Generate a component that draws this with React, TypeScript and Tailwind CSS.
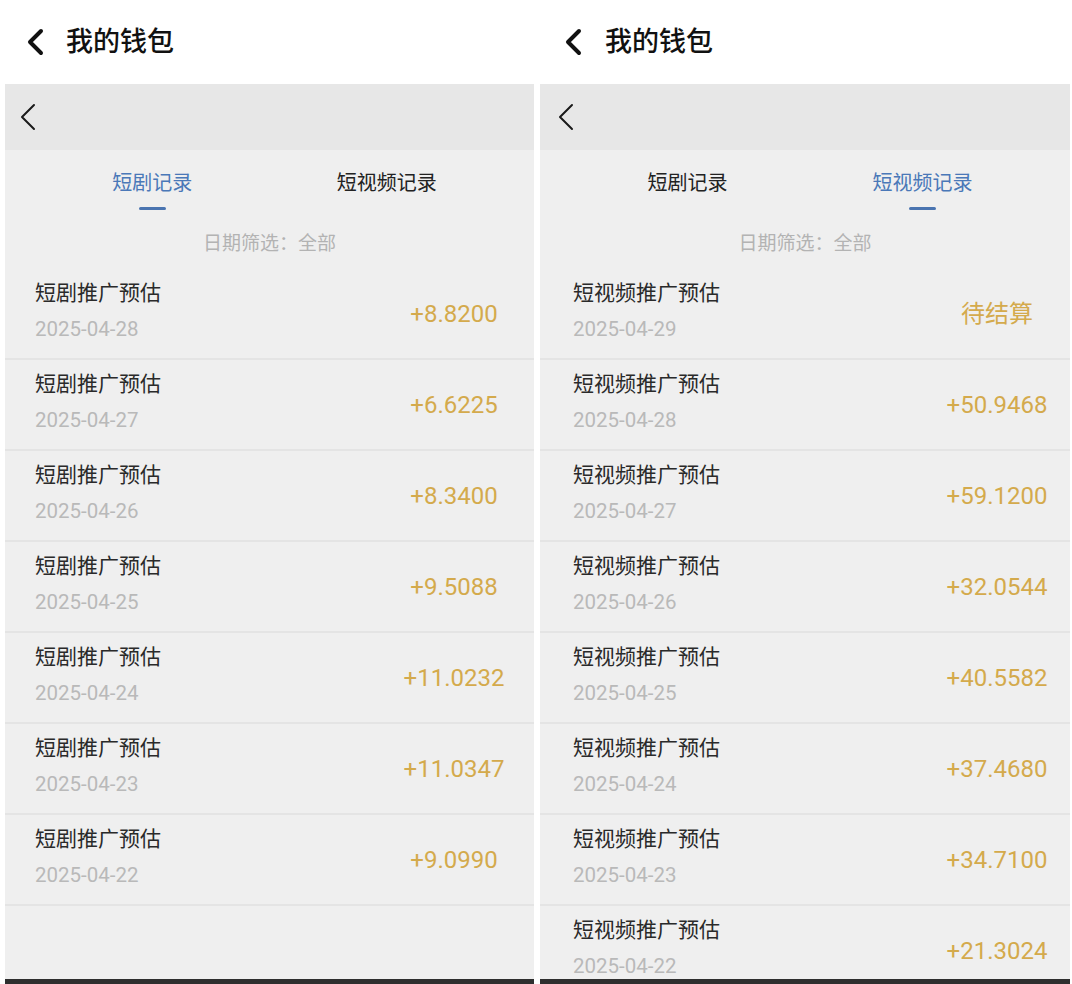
import React from "react";

type Row = { title: string; date: string; amount: string };

const dramaRows: Row[] = [
  { title: "短剧推广预估", date: "2025-04-28", amount: "+8.8200" },
  { title: "短剧推广预估", date: "2025-04-27", amount: "+6.6225" },
  { title: "短剧推广预估", date: "2025-04-26", amount: "+8.3400" },
  { title: "短剧推广预估", date: "2025-04-25", amount: "+9.5088" },
  { title: "短剧推广预估", date: "2025-04-24", amount: "+11.0232" },
  { title: "短剧推广预估", date: "2025-04-23", amount: "+11.0347" },
  { title: "短剧推广预估", date: "2025-04-22", amount: "+9.0990" },
];

const videoRows: Row[] = [
  { title: "短视频推广预估", date: "2025-04-29", amount: "待结算" },
  { title: "短视频推广预估", date: "2025-04-28", amount: "+50.9468" },
  { title: "短视频推广预估", date: "2025-04-27", amount: "+59.1200" },
  { title: "短视频推广预估", date: "2025-04-26", amount: "+32.0544" },
  { title: "短视频推广预估", date: "2025-04-25", amount: "+40.5582" },
  { title: "短视频推广预估", date: "2025-04-24", amount: "+37.4680" },
  { title: "短视频推广预估", date: "2025-04-23", amount: "+34.7100" },
  { title: "短视频推广预估", date: "2025-04-22", amount: "+21.3024" },
];

function BoldChevron() {
  return (
    <svg width="20" height="28" viewBox="0 0 20 28" fill="none">
      <path d="M16 3 L5 14 L16 25" stroke="#111" strokeWidth="4" strokeLinecap="round" strokeLinejoin="round" />
    </svg>
  );
}

function ThinChevron() {
  return (
    <svg width="18" height="28" viewBox="0 0 18 28" fill="none">
      <path d="M15 2 L3 14 L15 26" stroke="#1a1a1a" strokeWidth="2" strokeLinecap="round" strokeLinejoin="round" />
    </svg>
  );
}

function Tab({ label, active }: { label: string; active: boolean }) {
  return (
    <div className="flex-1 flex flex-col items-center">
      <span
        className={
          active
            ? "text-[20px] leading-[28px] text-[#4a78b8]"
            : "text-[20px] leading-[28px] text-[#222]"
        }
      >
        {label}
      </span>
      <div className={active ? "mt-[10px] h-[3px] w-[27px] rounded-full bg-[#4a74b0]" : "mt-[10px] h-[3px] w-[27px]"} />
    </div>
  );
}

function RecordRow({ row, padLeft, amountRight }: { row: Row; padLeft: string; amountRight: string }) {
  return (
    <div className={`flex h-[91px] shrink-0 items-start border-b-2 border-[#e4e4e4] ${padLeft} ${amountRight}`}>
      <div className="flex flex-1 flex-col pt-[10px]">
        <span className="text-[21px] leading-[28px] text-[#2a2a2a]">{row.title}</span>
        <span className="mt-[8px] text-[20.5px] leading-[28px] text-[#b9b9b9]">{row.date}</span>
      </div>
      <div className="flex h-full w-[120px] items-center justify-center">
        <span className="text-[24px] leading-[30px] text-[#d4aa4c]">{row.amount}</span>
      </div>
    </div>
  );
}

function Panel({
  active,
  rows,
  chevronPad,
  padLeft,
  amountRight,
}: {
  active: "drama" | "video";
  rows: Row[];
  chevronPad: string;
  padLeft: string;
  amountRight: string;
}) {
  return (
    <div className="flex h-[900px] flex-col overflow-hidden">
      <div className={`flex h-[66px] shrink-0 items-center bg-[#e7e7e7] ${chevronPad}`}>
        <ThinChevron />
      </div>
      <div className="flex min-h-0 flex-1 flex-col overflow-hidden bg-[#efefef]">
        <div className="flex px-[30px] pt-[19px]">
          <Tab label="短剧记录" active={active === "drama"} />
          <Tab label="短视频记录" active={active === "video"} />
        </div>
        <div className="mt-[20px] mb-[11px] text-center text-[19px] leading-[28px] text-[#b3b3b3]">
          日期筛选：全部
        </div>
        {rows.map((r) => (
          <RecordRow key={r.date} row={r} padLeft={padLeft} amountRight={amountRight} />
        ))}
      </div>
      <div className="h-[5px] shrink-0 bg-[#2e2e2e]" />
    </div>
  );
}

export default function App() {
  return (
    <div
      className="flex h-[984px] w-[1072px] overflow-hidden bg-white"
      style={{ fontFamily: 'Roboto, "Noto Sans CJK SC", sans-serif' }}
    >
      <div className="flex w-[534px] flex-col">
        <div className="flex h-[84px] items-center gap-[21px] pl-[25px]">
          <BoldChevron />
          <span className="text-[27px] leading-[34px] font-medium text-[#111]">我的钱包</span>
        </div>
        <div className="ml-[5px] w-[529px]">
          <Panel active="drama" rows={dramaRows} chevronPad="pl-[14px]" padLeft="pl-[30px]" amountRight="pr-[20px]" />
        </div>
      </div>
      <div className="flex w-[538px] flex-col">
        <div className="flex h-[84px] items-center gap-[22px] pl-[29px]">
          <BoldChevron />
          <span className="text-[27px] leading-[34px] font-medium text-[#111]">我的钱包</span>
        </div>
        <div className="ml-[6px] w-[530px]">
          <Panel active="video" rows={videoRows} chevronPad="pl-[17px]" padLeft="pl-[33px]" amountRight="pr-[13px]" />
        </div>
      </div>
    </div>
  );
}
